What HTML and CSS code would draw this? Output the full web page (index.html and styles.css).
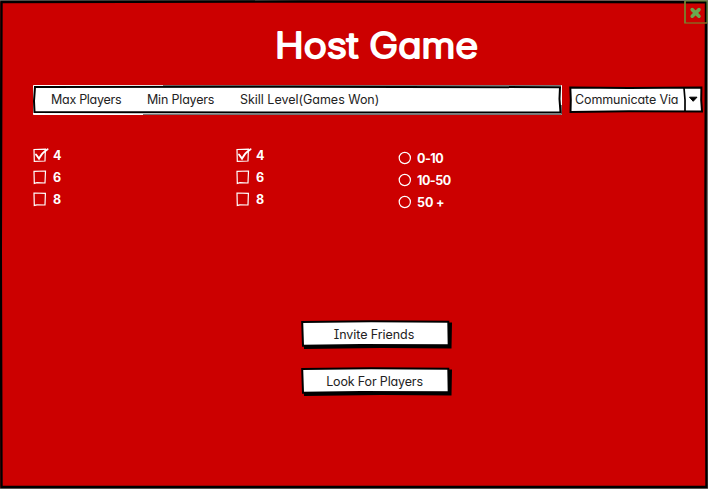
FILE: index.html
```html
<!DOCTYPE html>
<html lang="en">
<head>
<meta charset="utf-8">
<title>Host Game</title>
<link rel="stylesheet" href="styles.css">
</head>
<body>
<main class="window">
  <svg class="sketch" viewBox="0 0 708 489" aria-hidden="true">
    <path d="M0 0H708V1L350 .6L0 2ZM706.5 0H708V489H706ZM0 487.5L80 488L708 486V489H0Z" fill="#77706c"/>
    <path d="M1.5 2L300 1.5L706 2.2L705.5 200L706.5 487L1.5 487L.8 250Z" fill="none" stroke="#000" stroke-width="2.4"/>
  </svg>
  <button class="close" aria-label="Close">
    <svg viewBox="0 0 24 24"><path d="M1 1V23H23" fill="none" stroke="#8a6420" stroke-width="1.6"/><path d="M1 23V1H23V23" fill="none" stroke="#6a9a3c" stroke-width="1"/><path d="M8.2 9.6L15 16.2M15 9.6L8.2 16.2" fill="none" stroke="#6aa84f" stroke-width="3.6" stroke-linecap="round"/></svg>
  </button>
  <h1 class="title"><svg class="heading" viewBox="0 0 210 48"><text x="1" y="37" textLength="203" lengthAdjust="spacingAndGlyphs">Host Game</text></svg></h1>
  <div class="toolbar">
    <nav class="menu">
      <svg class="sketch" viewBox="0 0 529 30" aria-hidden="true"><path d="M.5 29.5V.5H528.5V29.5Z" fill="#fff" stroke="#fff"/><path d="M130 .5H528M110 29.5H528.5V20" fill="none" stroke="#777"/><path d="M2 2L260 1.8L527 2.2L526.5 14L527.5 27.5L280 27.5L1.5 27L1 16Z" fill="#fff" stroke="#000" stroke-width="2"/></svg>
      <span class="item max">Max Players</span><span class="item min">Min Players</span><span class="item skill">Skill Level(Games Won)</span>
    </nav>
    <div class="select">
      <svg class="sketch" viewBox="0 0 134 28" aria-hidden="true"><path d="M1.3 1.5L60 2L132.4 1.4L132.2 14L133 25.5L60 25.2L1.5 26L1.8 14Z" fill="#fff" stroke="#000" stroke-width="2"/><path d="M115 2Q116.5 14 116 25" fill="none" stroke="#000" stroke-width="1.7"/><path d="M120.5 11.2H128L124.2 15.3Z" stroke="#000"/></svg>
      <span class="item via">Communicate Via</span>
    </div>
  </div>
  <div class="options">
    <div class="group">
      <label class="option"><svg class="box" viewBox="0 0 16 16"><path d="M1 2.5L12.4 2.2L12 14L1.3 14.4Z"/><path class="tick" d="M3 7.5L6 11.6Q9 5.6 14.6 2.2"/></svg><span>4</span></label>
      <label class="option"><svg class="box" viewBox="0 0 16 16"><path d="M1 2.3L12.5 2L12 14L4 13.7L1.3 14.4Z"/></svg><span>6</span></label>
      <label class="option"><svg class="box" viewBox="0 0 16 16"><path d="M1 2L12.4 2.3L12 14L4 13.8L1.3 14.4Z"/></svg><span>8</span></label>
    </div>
    <div class="group">
      <label class="option"><svg class="box" viewBox="0 0 16 16"><path d="M1 2.5L12.4 2.2L12 14L1.3 14.4Z"/><path class="tick" d="M3 7.5L6 11.6Q9 5.6 14.6 2.2"/></svg><span>4</span></label>
      <label class="option"><svg class="box" viewBox="0 0 16 16"><path d="M1 2.3L12.5 2L12 14L4 13.7L1.3 14.4Z"/></svg><span>6</span></label>
      <label class="option"><svg class="box" viewBox="0 0 16 16"><path d="M1 2L12.4 2.3L12 14L4 13.8L1.3 14.4Z"/></svg><span>8</span></label>
    </div>
    <div class="group radios">
      <label class="option"><svg class="box" viewBox="0 0 16 16"><circle cx="6.8" cy="8" r="5.6"/></svg><span>0-10</span></label>
      <label class="option"><svg class="box" viewBox="0 0 16 16"><circle cx="6.8" cy="8" r="5.6"/></svg><span>10-50</span></label>
      <label class="option"><svg class="box" viewBox="0 0 16 16"><circle cx="6.8" cy="8" r="5.6"/></svg><span>50 +</span></label>
    </div>
  </div>
  <div class="actions">
    <button class="action"><svg class="sketch" viewBox="0 0 151 30" aria-hidden="true"><path d="M2 4L151 2.5L150.5 28.5L80 28L3 29Z"/><path d="M1.2 2L70 1.2L147.3 1.8L147.7 25.3L60 25L2 25.8Z" fill="#fff" stroke="#000" stroke-width="2"/></svg><span class="item invite">Invite Friends</span></button>
    <button class="action"><svg class="sketch" viewBox="0 0 151 30" aria-hidden="true"><path d="M2 4L151 2.5L150.5 28.5L80 28L3 29Z"/><path d="M1.2 2L70 1.2L147.3 1.8L147.7 25.3L60 25L2 25.8Z" fill="#fff" stroke="#000" stroke-width="2"/></svg><span class="item look">Look For Players</span></button>
  </div>
</main>
</body>
</html>
```
FILE: styles.css
```css
* { box-sizing: border-box; }
body { margin: 0; font-family: Inter, "Open Sans", sans-serif; font-feature-settings: "cv11" 1; color: #222; }
.window { position: relative; width: 708px; height: 489px; background: #c00; overflow: hidden; display: flex; flex-direction: column; }
.sketch { position: absolute; inset: 0; width: 100%; height: 100%; }
button { border: 0; padding: 0; background: none; font: inherit; color: inherit; font-feature-settings: inherit; }
.close { position: absolute; left: 684px; top: 0; width: 24px; height: 24px; }
.close svg { display: block; width: 24px; height: 24px; }
.title { margin: 21px 0 0 274px; height: 64px; font-size: 35px; font-weight: 300; }
.heading { display: block; width: 210px; height: 48px; fill: #fff; stroke: #fff; stroke-width: 2.2; stroke-linejoin: round; overflow: visible; }
.toolbar { display: flex; padding-left: 33px; gap: 7px; }
.menu { position: relative; width: 529px; height: 30px; display: flex; align-items: center; padding-left: 18px; }
.select { position: relative; width: 134px; height: 28px; display: flex; align-items: center; padding-left: 6px; margin-top: 1px; }
.item { position: relative; font-size: 12.5px; line-height: 18px; white-space: nowrap; }
.max { width: 96px; letter-spacing: -.28px; }
.min { width: 93px; letter-spacing: -.18px; }
.skill { letter-spacing: -.02px; }
.via { letter-spacing: -.12px; margin-top: -1px; }
.invite { font-feature-settings: "cv11" 1, "cv08" 1; letter-spacing: -.07px; }
.look { letter-spacing: -.15px; left: .5px; }
.options { display: flex; padding: 29px 0 0 33px; height: 205px; }
.group { width: 203px; }
.group + .group { width: 162px; }
.radios { padding-top: 3px; }
.option { display: flex; align-items: center; height: 22px; color: #fff; font-size: 12.5px; font-weight: 700; }
.box { width: 16px; height: 16px; margin-right: 4px; fill: none; stroke: #fff; stroke-width: 1.2; overflow: visible; }
.tick { stroke-width: 1.9; stroke-linecap: round; }
.radios .box { margin-right: 3px; }
.radios .option { letter-spacing: -.5px; }
.radios .option:last-child { letter-spacing: -.1px; }
.actions { display: flex; flex-direction: column; gap: 17px; padding-left: 301px; }
.action { position: relative; width: 151px; height: 30px; display: flex; align-items: center; justify-content: center; padding: 0 5px 1px 0; }
```
